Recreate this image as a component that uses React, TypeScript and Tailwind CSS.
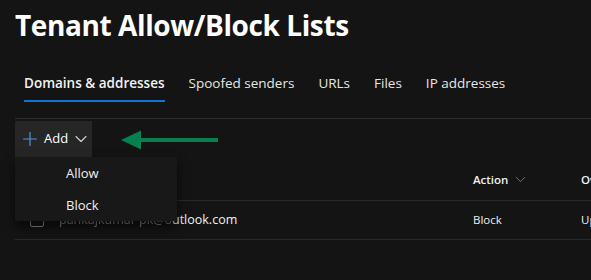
import { FiPlus, FiChevronDown } from 'react-icons/fi'

const tabs = ['Domains & addresses', 'Spoofed senders', 'URLs', 'Files', 'IP addresses']

export default function App() {
  return (
    <div
      className="relative w-[591px] h-[280px] overflow-hidden bg-[#141414] text-[#f0f0f0]"
      style={{ fontFamily: '"Open Sans", "Noto Sans", sans-serif' }}
    >
      {/* Header */}
      <h1 className="pl-[15px] pt-[6px] text-[28px] leading-[38px] font-bold text-white tracking-[-0.4px]">
        Tenant Allow/Block Lists
      </h1>

      {/* Tabs */}
      <div className="ml-[15px] mt-[23px] border-b border-[#2f2f2f]">
        <div className="flex gap-[24px] pl-[9px] text-[13.5px]">
          {tabs.map((tab, i) => (
            <div key={tab} className="flex flex-col shrink-0">
              <span className={`leading-[33px] whitespace-nowrap ${i === 0 ? 'font-semibold text-[#f2f2f2]' : 'text-[#e6e6e6]'}`}>
                {tab}
              </span>
              <div className={`h-[2px] mb-[16px] ${i === 0 ? 'bg-[#1174d4]' : 'bg-transparent'}`} />
            </div>
          ))}
        </div>
      </div>

      {/* Command bar */}
      <div className="flex items-center ml-[15px] mt-[2px] h-[36px]">
        <button className="flex items-center h-full w-[77px] bg-[#262626] pl-[4px] text-[13px] text-white">
          <FiPlus className="text-[#4c94e0]" size={22} strokeWidth={1.3} />
          <span className="ml-[3px] font-medium">Add</span>
          <FiChevronDown className="ml-[3px] text-[#d0d0d0]" size={20} strokeWidth={1.3} />
        </button>
        <svg width="98" height="20" viewBox="0 0 98 20" className="ml-[29px] mt-[1px]">
          <rect x="18" y="8" width="79" height="4" fill="#07804f" />
          <polygon points="0,10 20,0.5 20,19.5" fill="#07804f" />
        </svg>
      </div>

      {/* Table */}
      <div className="ml-[15px] text-[11.5px] text-[#f0f0f0]">
        <div className="flex items-end h-[44px] border-b border-[#2a2a2a] pb-[12px]">
          <div className="w-[458px] shrink-0" />
          <div className="flex items-center w-[108px] shrink-0 font-semibold">
            Action
            <FiChevronDown className="ml-[4px] text-[#8a8a8a]" size={17} strokeWidth={1.1} />
          </div>
          <div className="font-semibold shrink-0">Own</div>
        </div>
        <div className="flex items-center h-[39px] border-b border-[#2a2a2a]">
          <div className="w-[44px] pl-[15px] shrink-0">
            <div className="w-[14px] h-[14px] rounded-[2px] border border-[#8c8c8c]" />
          </div>
          <div className="w-[414px] shrink-0 text-[12.5px] whitespace-nowrap">
            <span className="text-[#8a8a8a] blur-[0.6px]">pankajkumar pk@o</span>utlook.com
          </div>
          <div className="w-[108px] shrink-0">Block</div>
          <div className="shrink-0">Upd</div>
        </div>
      </div>

      {/* Add menu */}
      <div className="absolute left-[15px] top-[157px] w-[162px] bg-[#181818] text-[13px] text-[#f0f0f0] shadow-[0_6px_10px_rgba(0,0,0,0.6)]">
        <div className="h-[32px] leading-[32px] pl-[51px]">Allow</div>
        <div className="h-[32px] leading-[32px] pl-[51px]">Block</div>
      </div>
    </div>
  )
}
